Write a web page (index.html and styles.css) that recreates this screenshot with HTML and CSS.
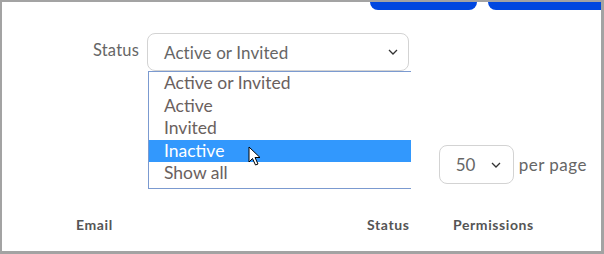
FILE: index.html
```html
<!DOCTYPE html>
<html lang="en">
<head>
    <meta charset="UTF-8">
    <meta name="viewport" content="width=device-width, initial-scale=1.0">
    <title>Users</title>
    <link rel="stylesheet" href="styles.css">
</head>
<body>

    <div class="frame">
        <div class="top-actions">
            <a href="#" class="btn-primary"></a>
            <a href="#" class="btn-primary wide"></a>
        </div>

        <div class="filter-row">
            <label class="filter-label">Status</label>
            <div class="select-wrap">
                <div class="select-box">
                    <span>Active or Invited</span>
                    <svg class="chevron" width="10" height="6" viewBox="0 0 10 6"><path d="M1 1 L5 5 L9 1" fill="none" stroke="#333" stroke-width="1.3"/></svg>
                </div>
                <ul class="select-menu">
                    <li>Active or Invited</li>
                    <li>Active</li>
                    <li>Invited</li>
                    <li class="selected">Inactive</li>
                    <li>Show all</li>
                </ul>
                <svg class="cursor" width="14" height="21" viewBox="0 0 14 21">
                    <path d="M1 1 L1 16 L4.5 12.5 L7.5 19 L10 18 L7 11.5 L12 11.5 Z" fill="#fff" stroke="#000" stroke-width="1" stroke-linejoin="round"/>
                </svg>
            </div>
        </div>

        <div class="paging-row">
            <div class="select-box small">
                <span>50</span>
                <svg class="chevron" width="10" height="6" viewBox="0 0 10 6"><path d="M1 1 L5 5 L9 1" fill="none" stroke="#333" stroke-width="1.3"/></svg>
            </div>
            <span class="per-page">per page</span>
        </div>

        <div class="table-head">
            <span class="col-email">Email</span>
            <span class="col-status">Status</span>
            <span class="col-perm">Permissions</span>
        </div>
    </div>

</body>
</html>
```

FILE: styles.css
```css
/* General */
body {
    margin: 0;
    padding: 0;
    font-family: Lato, "Open Sans", sans-serif;
    color: #666;
    background: #fff;
}

.frame {
    width: 604px;
    height: 254px;
    box-sizing: border-box;
    border-style: solid;
    border-color: #a3a3a3;
    border-width: 2px 3px 3px 2px;
    overflow: hidden;
    position: relative;
}

/* Top buttons */
.top-actions {
    display: flex;
    gap: 11px;
    padding-left: 368px;
}

.btn-primary {
    display: block;
    flex-shrink: 0;
    width: 107px;
    height: 8px;
    background: #0047e0;
    border-radius: 0 0 9px 9px;
}

.btn-primary.wide {
    width: 130px;
}

/* Status filter */
.filter-row {
    display: flex;
    margin-top: 23px;
}

.filter-label {
    width: 137px;
    text-align: right;
    padding-right: 8px;
    padding-top: 7px;
    font-size: 16.5px;
    letter-spacing: 0.2px;
}

.select-wrap {
    position: relative;
}

.select-box {
    width: 262px;
    height: 38px;
    box-sizing: border-box;
    border: 1px solid #d3d3d3;
    border-radius: 8px;
    display: flex;
    align-items: center;
    justify-content: space-between;
    padding: 0 10px 0 16px;
    font-size: 17px;
    letter-spacing: 0.1px;
    color: #666;
}

.chevron {
    display: block;
}

.select-menu {
    position: absolute;
    top: 38px;
    left: 1px;
    width: 262px;
    margin: 0;
    padding: 0 0 3px;
    list-style: none;
    border: 1px solid #7b9ad0;
    border-right: none;
    background: #fff;
}

.select-menu li {
    height: 22.5px;
    line-height: 22px;
    padding-left: 15px;
    font-size: 17.5px;
    color: #6a615e;
}

.select-menu li.selected {
    background: #3298fd;
    color: #fff;
}

.cursor {
    position: absolute;
    left: 101px;
    top: 113px;
}

/* Paging */
.paging-row {
    display: flex;
    justify-content: flex-end;
    align-items: center;
    gap: 5px;
    margin-top: 74px;
    padding-right: 14px;
}

.select-box.small {
    width: 75px;
    height: 39px;
    padding: 0 12px 0 16px;
}

.per-page {
    font-size: 17px;
    letter-spacing: 0.5px;
}

/* Table header */
.table-head {
    display: flex;
    margin-top: 31px;
    font-size: 14px;
    font-weight: bold;
    letter-spacing: 0.6px;
    color: #555;
    line-height: 20px;
}

.col-email {
    margin-left: 74px;
    width: 291px;
}

.col-status {
    width: 86px;
}
```
